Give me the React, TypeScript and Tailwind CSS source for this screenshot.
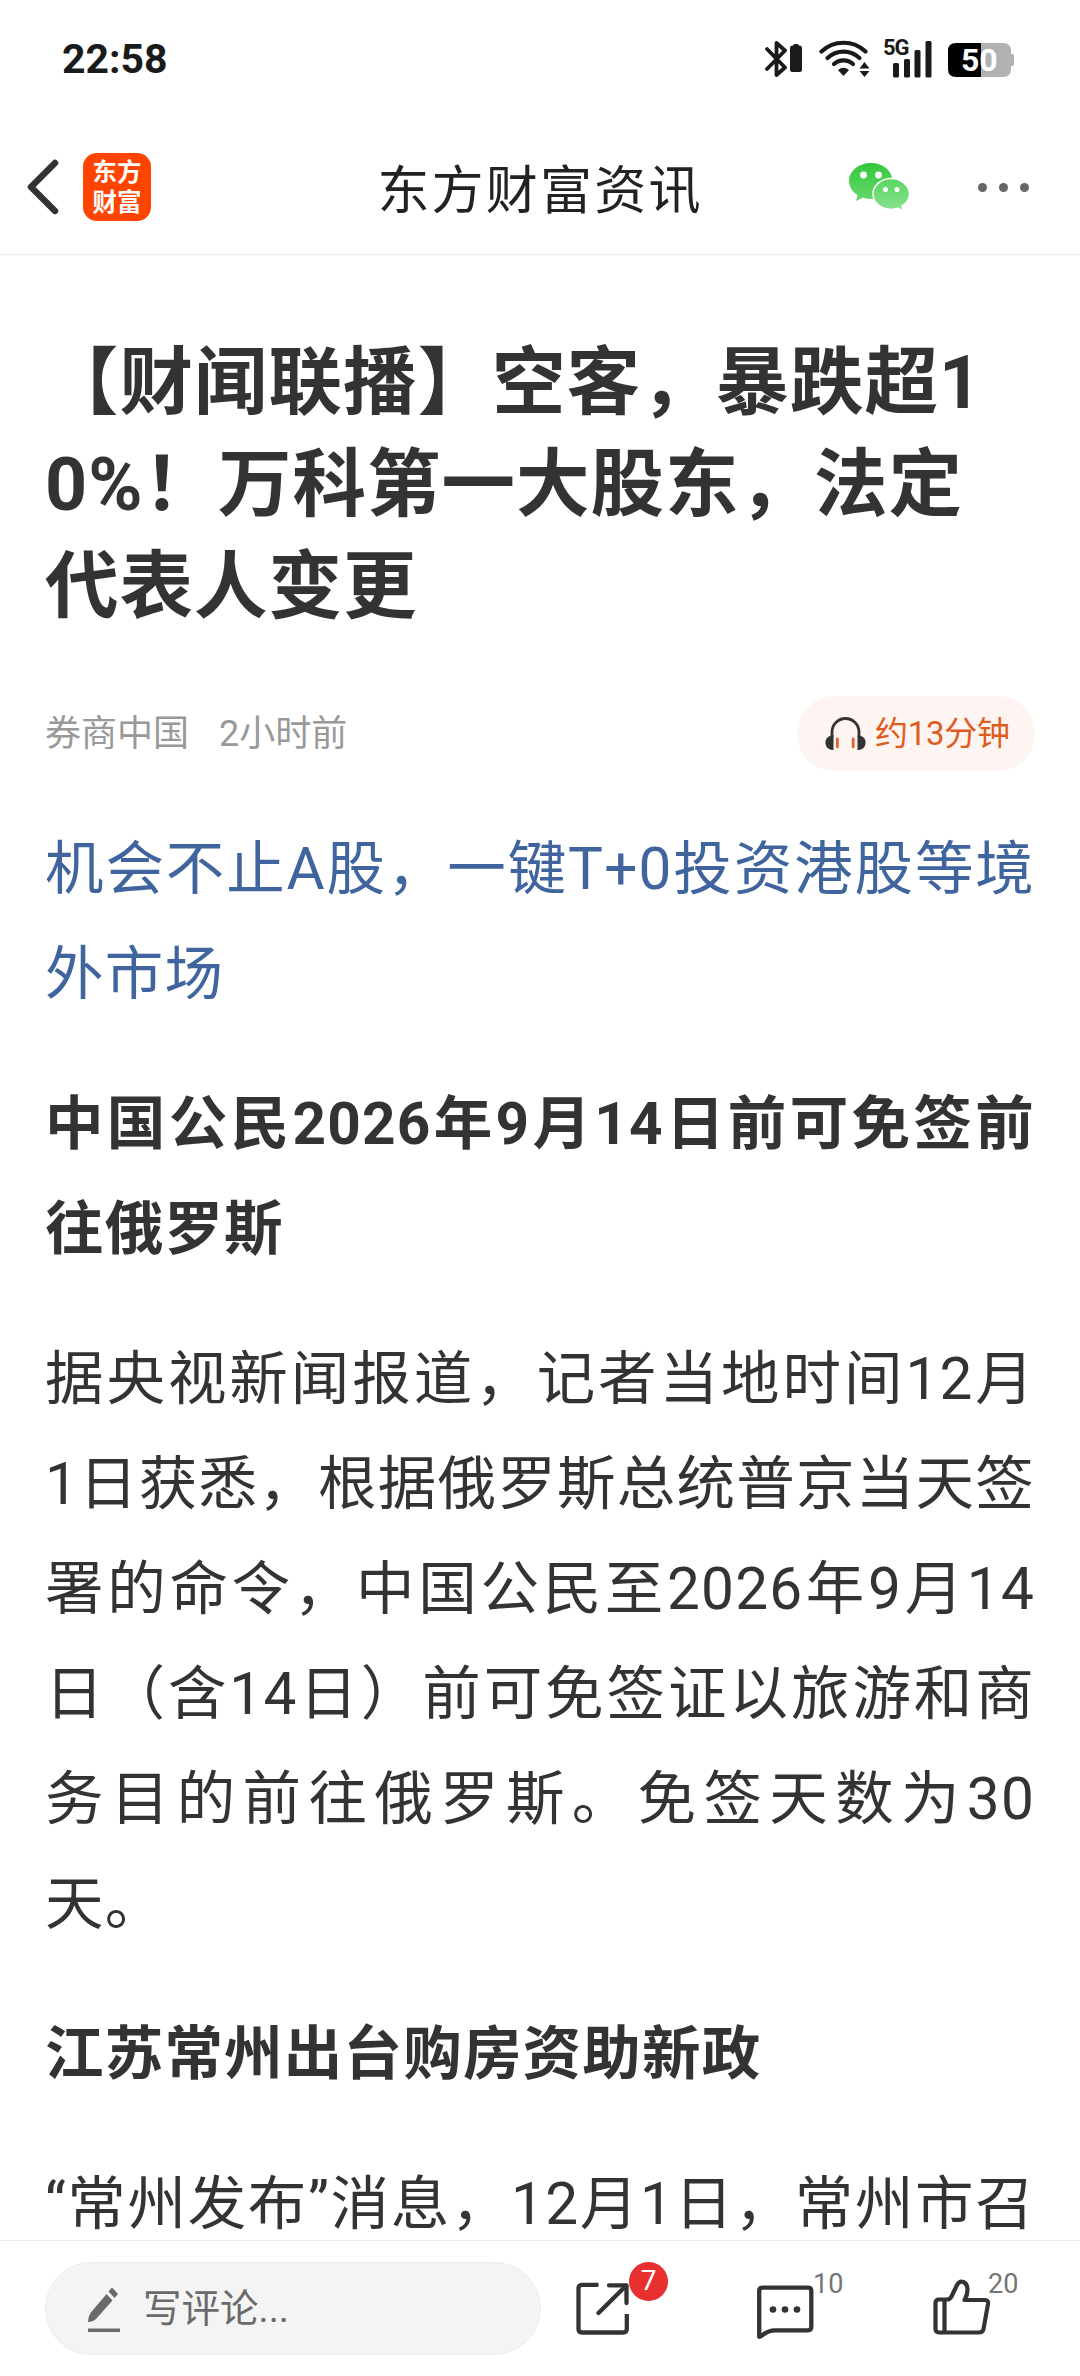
import { ReactNode } from "react";

const StatusBar = () => {
  return (
    <div className="h-[112px] shrink-0 flex items-start justify-between pl-[62px] pr-[65px]">
      <span className="mt-[35px] text-[41px] leading-[48px] font-bold text-[#1a1a1a]">
        22:58
      </span>
      <div className="mt-[40px] flex items-start text-[#1a1a1a]">
        {/* bluetooth + device battery */}
        <svg width="38" height="38" viewBox="0 0 38 38">
          <path
            d="M2 9 L20 27.500 L11.500 35 V3 L20 10.500 L2 29"
            fill="none"
            stroke="currentColor"
            strokeWidth="3.800"
            strokeLinecap="round"
            strokeLinejoin="round"
          />
          <rect x="25" y="5.500" width="12" height="26.500" rx="2.500" fill="currentColor" />
          <rect x="28.500" y="4" width="5" height="3" rx="1" fill="currentColor" />
        </svg>
        {/* wifi */}
        <svg className="ml-4" width="52" height="38" viewBox="0 0 52 38">
          <g fill="none" stroke="currentColor" strokeWidth="4.200" strokeLinecap="round">
            <path d="M2.500 11.500 A32 32 0 0 1 46.500 11.500" />
            <path d="M8.500 18 A23.500 23.500 0 0 1 40.500 18" />
            <path d="M15 24 A14 14 0 0 1 34 24" />
          </g>
          <path d="M19 30 Q24.500 25.500 30 30 L25.500 35 Q24.500 36 23.500 35 Z" fill="currentColor" />
          <path d="M45.500 22 L50.500 28.500 H40.500 Z M45.500 37 L40.500 31 H50.500 Z" fill="currentColor" />
        </svg>
        {/* signal */}
        <div className="relative ml-3">
          <svg width="50" height="38" viewBox="0 0 50 38">
            <rect x="10" y="23" width="6" height="14.500" rx="1.500" fill="currentColor" />
            <rect x="21" y="19" width="6" height="18.500" rx="1.500" fill="currentColor" />
            <rect x="31.500" y="10" width="6" height="27.500" rx="1.500" fill="currentColor" />
            <rect x="42.500" y="1" width="6" height="36.500" rx="1.500" fill="currentColor" />
          </svg>
          <span className="absolute left-0 -top-[5px] text-[22px] leading-[26px] font-bold tracking-[-1.2px]">
            5G
          </span>
        </div>
        {/* battery */}
        <div className="relative ml-[15px]">
          <svg width="67" height="38" viewBox="0 0 67 38">
            <path d="M33 3 H55 Q63 3 63 11 V29 Q63 37 55 37 H33 Z" fill="#b2b2b2" />
            <rect x="61" y="14" width="5" height="12" rx="2" fill="#b2b2b2" />
            <path d="M33 3 H8 Q0 3 0 11 V29 Q0 37 8 37 H33 Z" fill="#000" />
          </svg>
          <span className="absolute left-[13px] top-[1px] text-[32px] leading-[38px] font-bold text-white">
            50
          </span>
        </div>
      </div>
    </div>
  );
};

const NavBar = () => {
  return (
    <header className="h-[143px] shrink-0 grid grid-cols-3 border-b border-[#ebebeb] pb-[2px]">
      <div className="flex items-start pl-[26px]">
        <svg className="mt-[47px]" width="34" height="56" viewBox="0 0 34 56">
          <path
            d="M29 4 L5 28 L29 52"
            fill="none"
            stroke="#333"
            strokeWidth="6.500"
            strokeLinecap="round"
            strokeLinejoin="round"
          />
        </svg>
        <div className="mt-[41px] ml-[23px] size-[68px] rounded-[14px] bg-[#ff4400] flex flex-col items-center pt-[5px] text-white text-[24.500px] leading-[29.500px] font-bold">
          <span>东方</span>
          <span>财富</span>
        </div>
      </div>
      <h2 className="mt-[44px] text-center whitespace-nowrap text-[52px] leading-[72px] tracking-[2.2px] text-[#222]">
        东方财富资讯
      </h2>
      <div className="flex justify-end items-start pr-[51px]">
        <svg className="mt-[49px]" width="64" height="52" viewBox="0 0 64 52">
          <defs>
            <linearGradient id="wxBig" x1="0" y1="0" x2="0" y2="1">
              <stop offset="0" stopColor="#34c73c" />
              <stop offset="1" stopColor="#67d96d" />
            </linearGradient>
            <linearGradient id="wxSmall" x1="0" y1="0" x2="0" y2="1">
              <stop offset="0" stopColor="#58d660" />
              <stop offset="1" stopColor="#8ae290" />
            </linearGradient>
          </defs>
          <path
            d="M23 2 C11 2 1 10 1 20 C1 26 4.500 31 9.500 34 L8 40 L15 36.500 Q19 38 23 38 C35 38 44.500 30 44.500 20 C44.500 10 35 2 23 2 Z"
            fill="url(#wxBig)"
          />
          <path
            d="M43 17.500 C33 17.500 25 24.500 25 33 C25 41.500 33 48.500 43 48.500 Q46.500 48.500 50 47.300 L55.500 50 L54 45 C59 42 61.500 38 61.500 33 C61.500 24.500 53 17.500 43 17.500 Z"
            fill="url(#wxSmall)"
            stroke="#fff"
            strokeWidth="1.500"
          />
          <circle cx="15.500" cy="14" r="3.400" fill="#fff" />
          <circle cx="30.500" cy="14" r="3.400" fill="#fff" />
          <circle cx="37.500" cy="28.500" r="2.500" fill="#fff" />
          <circle cx="49" cy="28.500" r="2.500" fill="#fff" />
        </svg>
        <div className="mt-[71px] ml-[66px] flex gap-3">
          <span className="size-[9px] rounded-full bg-[#666]" />
          <span className="size-[9px] rounded-full bg-[#666]" />
          <span className="size-[9px] rounded-full bg-[#666]" />
        </div>
      </div>
    </header>
  );
};

const ListenPill = () => {
  return (
    <button className="h-[75px] w-[238px] rounded-full bg-[#fef5f2] flex items-center pl-[27px] text-[33px] text-[#de5c1e]">
      <svg width="43" height="34" viewBox="0 0 43 34">
        <path
          d="M8 20 V15 A13.500 13.500 0 0 1 35 15 V20"
          fill="none"
          stroke="#333"
          strokeWidth="2.800"
        />
        <path d="M9.500 18.500 V33 H8 A7.300 7.300 0 0 1 6.500 18.800 Z" fill="#333" />
        <path d="M33.500 18.500 V33 H35 A7.300 7.300 0 0 0 36.500 18.800 Z" fill="#333" />
        <rect x="12" y="20.500" width="2.800" height="11" rx="1.400" fill="#e0662b" />
        <rect x="27.800" y="20.500" width="2.800" height="11" rx="1.400" fill="#e0662b" />
      </svg>
      <span className="ml-[8px] leading-[44px] whitespace-nowrap tracking-[-0.3px]">约13分钟</span>
    </button>
  );
};

const Subheading = ({ children }: { children: ReactNode }) => (
  <h3 className="mt-[45px] font-bold">{children}</h3>
);

const Article = () => {
  return (
    <main className="flex-1 min-h-0 overflow-hidden px-[45px] pt-[77px] text-[#333]">
      <h1 className="text-[73.500px] leading-[102px] tracking-[1px] font-bold whitespace-nowrap">
        【财闻联播】空客，暴跌超1
        <br />
        0%！万科第一大股东，法定
        <br />
        代表人变更
      </h1>

      <div className="mt-[58px] flex items-center justify-between">
        <div className="flex gap-[30px] text-[36px] leading-[48px] text-[#999]">
          <span>券商中国</span>
          <span>2小时前</span>
        </div>
        <ListenPill />
      </div>

      <div className="mt-[46px] text-[58.500px] leading-[105px] tracking-[1.2px] text-justify">
        <p className="text-[#40659e]">
          机会不止A股，一键T+0投资港股等境外市场
        </p>
        <Subheading>中国公民2026年9月14日前可免签前往俄罗斯</Subheading>
        <p className="mt-[45px]">
          据央视新闻报道，记者当地时间12月1日获悉，根据俄罗斯总统普京当天签署的命令，中国公民至2026年9月14日（含14日）前可免签证以旅游和商务目的前往俄罗斯。免签天数为30天。
        </p>
        <Subheading>江苏常州出台购房资助新政</Subheading>
        <p className="mt-[45px] [text-align-last:justify]">
          “常州发布”消息，12月1日，常州市召
        </p>
      </div>
    </main>
  );
};

const BottomBar = () => {
  return (
    <footer className="h-[136px] shrink-0 flex items-start border-t border-[#ebebeb] bg-white pl-[45px]">
      <div className="mt-[21px] w-[496px] h-[93px] rounded-full border border-[#ececec] bg-[#f4f4f4] flex items-center pl-[41px] text-[#6a6a6a]">
        <svg width="34" height="46" viewBox="0 0 34 46">
          <path d="M19.500 8 L25.500 14.500 L9 33 Q6 36 1 36 Q1 31 3.500 27 Z" fill="currentColor" />
          <path d="M21.500 5.500 L25 1.500 L31 8 L27.500 12 Z" fill="currentColor" />
          <rect x="1" y="42.500" width="32" height="3.500" fill="currentColor" />
        </svg>
        <span className="ml-[22px] text-[38.500px] leading-[54px]">写评论...</span>
      </div>

      <div className="relative mt-[41px] ml-[35px]">
        <svg width="54" height="54" viewBox="0 0 54 54">
          <g fill="none" stroke="#333" strokeWidth="4.300" strokeLinejoin="round">
            <path d="M22.500 2.800 H6 Q2.500 2.800 2.500 6.300 V47 Q2.500 50.500 6 50.500 H47 Q50.800 50.500 50.800 47 V32" />
            <path d="M33 3.300 H50.500 V21" strokeLinecap="round" />
            <path d="M50 3.800 L22.500 31" strokeLinecap="round" />
          </g>
        </svg>
        <span className="absolute left-[53px] -top-[20px] size-[39px] rounded-full bg-[#e83030] text-white text-[28px] leading-[38px] text-center">
          7
        </span>
      </div>

      <div className="relative mt-[43px] ml-[126px]">
        <svg width="58" height="56" viewBox="0 0 58 56">
          <path
            d="M3.200 52.500 V7 Q3.200 3.700 6.500 3.700 H52 Q55.300 3.700 55.300 7 V43 Q55.300 46.300 52 46.300 H19 Q12.500 46.300 6.500 51 Q3.200 53.500 3.200 52.500 Z"
            fill="none"
            stroke="#333"
            strokeWidth="4.300"
            strokeLinejoin="round"
          />
          <circle cx="17" cy="25.500" r="3.300" fill="#333" />
          <circle cx="29" cy="25.500" r="3.300" fill="#333" />
          <circle cx="41" cy="25.500" r="3.300" fill="#333" />
        </svg>
        <span className="absolute left-[57px] -top-[16px] text-[27px] leading-[32px] text-[#757575]">
          10
        </span>
      </div>

      <div className="relative mt-[37px] ml-[119px]">
        <svg width="58" height="58" viewBox="0 0 58 58">
          <g fill="none" stroke="#333" strokeWidth="4.200" strokeLinejoin="round">
            <path d="M5 21.500 H14 Q17 21.500 18.500 18.500 L24 7 Q26.500 2.500 30.500 4 Q34.500 6 34.500 12 Q34.500 17 31.500 22 H52 Q55.500 22 55 26 L50.500 51 Q49.800 54.500 46 54.500 H6 Q2.500 54.500 2.500 51 V25 Q2.500 21.500 6 21.500 Z" />
            <path d="M11.500 22 V54" />
          </g>
        </svg>
        <span className="absolute left-[55px] -top-[10px] text-[27px] leading-[32px] text-[#757575]">
          20
        </span>
      </div>
    </footer>
  );
};

const App = () => {
  return (
    <div
      lang="zh-CN"
      className="w-[1080px] h-[2376px] flex flex-col overflow-hidden bg-white font-[Roboto,'Noto_Sans_CJK_SC',sans-serif] [text-spacing-trim:space-all]"
    >
      <StatusBar />
      <NavBar />
      <Article />
      <BottomBar />
    </div>
  );
};

export default App;
